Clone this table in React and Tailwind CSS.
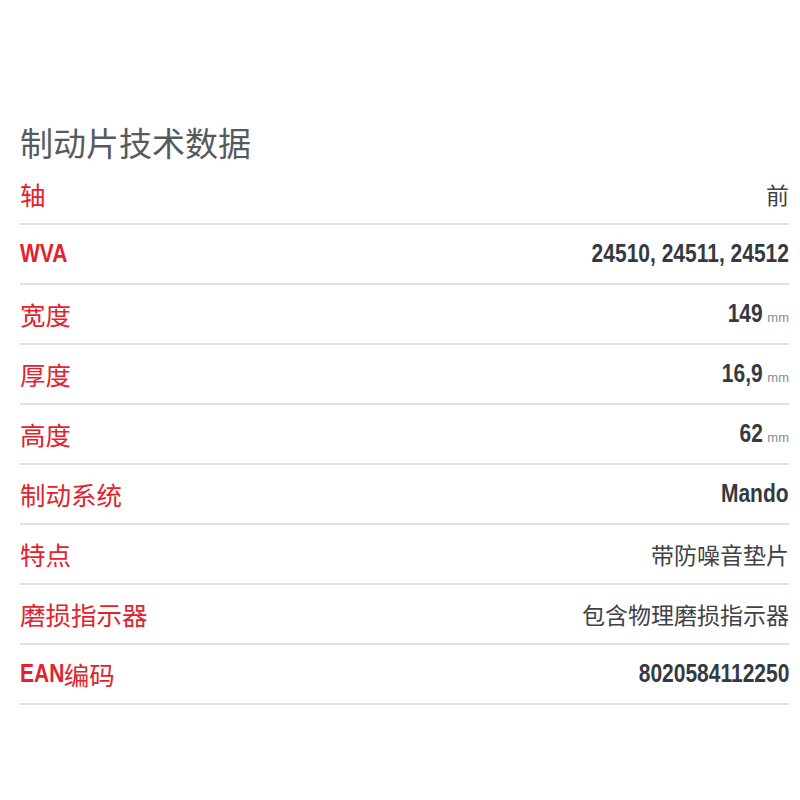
const rows = [
  { label: '轴', value: '前', kind: 'cjk' },
  { label: 'WVA', value: '24510, 24511, 24512', kind: 'num', latinLabel: true },
  { label: '宽度', value: '149', unit: 'mm', kind: 'num' },
  { label: '厚度', value: '16,9', unit: 'mm', kind: 'num' },
  { label: '高度', value: '62', unit: 'mm', kind: 'num' },
  { label: '制动系统', value: 'Mando', kind: 'num' },
  { label: '特点', value: '带防噪音垫片', kind: 'cjk' },
  { label: '磨损指示器', value: '包含物理磨损指示器', kind: 'cjk' },
  { label: 'EAN编码', value: '8020584112250', kind: 'num', ean: true },
]

const cjk = "font-['Noto_Sans_CJK_SC',sans-serif]"
const narrow = "font-['Liberation_Sans',Arial,sans-serif] font-bold inline-block scale-x-[0.84]"

function Label({ row }) {
  if (row.latinLabel) {
    return <span className={`${narrow} origin-left text-[25px] text-[#e2222c]`}>{row.label}</span>
  }
  if (row.ean) {
    return (
      <span className={`${cjk} flex items-center text-[25.5px] text-[#e2222c]`}>
        <span className={`${narrow} origin-left mr-[-9px] text-[25px]`}>EAN</span>编码
      </span>
    )
  }
  return <span className={`${cjk} text-[25.5px] text-[#e2222c]`}>{row.label}</span>
}

function Value({ row }) {
  if (row.kind == 'cjk') {
    return <span className={`${cjk} text-[23px] text-[#3f4247]`}>{row.value}</span>
  }
  return (
    <span className="flex items-baseline">
      <span className={`${narrow} origin-right text-[25px] text-[#353a42]`}>{row.value}</span>
      {row.unit && <span className="ml-[5px] font-['Liberation_Sans',sans-serif] text-[13px] text-[#8a8a8a]">mm</span>}
    </span>
  )
}

export default function App() {
  return (
    <div className="w-[800px] h-[800px] bg-white pl-[20px] pr-[11px] pt-[119px]">
      <h1 className={`${cjk} text-[33px] leading-[46px] text-[#555a5e]`}>制动片技术数据</h1>
      <div>
        {rows.map((r, i) => (
          <div key={i} className="flex h-[60px] items-center justify-between border-b-2 border-[#e0e0e0]">
            <Label row={r} />
            <Value row={r} />
          </div>
        ))}
      </div>
    </div>
  )
}
